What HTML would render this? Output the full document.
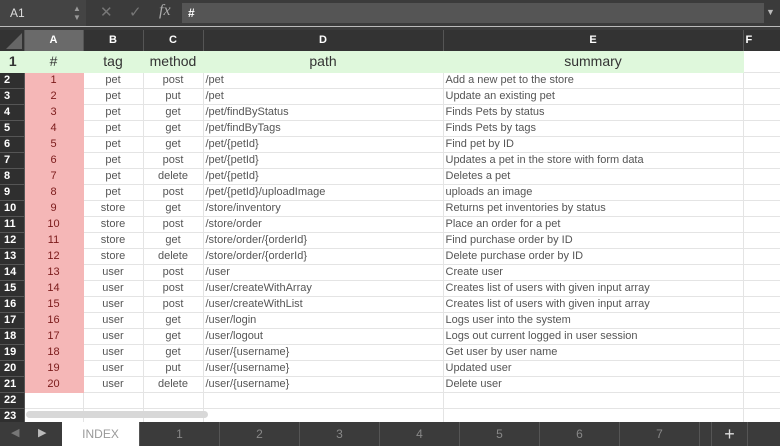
<!DOCTYPE html>
<html><head><meta charset="utf-8"><style>
*{margin:0;padding:0;box-sizing:border-box}
body{width:780px;height:446px;overflow:hidden;background:#fff;font-family:"Liberation Sans",sans-serif;position:relative}
#fb{position:absolute;left:0;top:0;width:780px;height:26px;background:#3b3b3b}
#nb{position:absolute;left:0;top:0;width:86px;height:26px;background:#444;color:#ddd;font-size:12px;line-height:26px;padding-left:10px}
#inp{position:absolute;left:182px;top:3px;width:582px;height:20px;background:#555;color:#fff;font-weight:bold;font-size:12px;line-height:20px;padding-left:6px}
#sep{position:absolute;left:0;top:26px;width:780px;height:4px;background:#3b3b3b;border-top:1px solid #bbb}
table{position:absolute;left:0;top:30px;border-collapse:collapse;table-layout:fixed;width:790px}
td{overflow:hidden;white-space:nowrap;font-size:11px;color:#555;height:16px;line-height:15px;border-right:1px solid #e4e4e4;border-bottom:1px solid #e4e4e4;padding:0 2px}
tr.h td{height:21px;background:#333;color:#fff;font-weight:bold;text-align:center;font-size:11px;border-right:1px solid #555;border-bottom:none}
tr.h td.sel{background:#6a6a6a}
tr.r1 td{height:21px;background:#dff8dc;color:#333;font-size:14px;text-align:center;border-color:#dff8dc}
td.rn{background:#2f2f2f;color:#fff;font-weight:bold;text-align:left;padding-left:4px;font-size:11px;border-color:#555}
td.a{background:#f5b7b7;color:#7a1a1a;text-align:center;border-color:#f5b7b7}
td.c{text-align:center}
#tabs{position:absolute;left:0;top:422px;width:780px;height:24px;background:#3b3b3b}
.t{position:absolute;top:0;height:24px;width:80px;color:#888;font-size:12px;text-align:center;line-height:24px;border-right:1px solid #555}
</style></head><body>
<div id="fb"><div id="nb">A1<span style="position:absolute;left:73px;top:0;color:#999;font-size:8px;line-height:9px;top:4px">▲<br>▼</span></div>
<span style="position:absolute;left:100px;top:3px;color:#777;font-size:15px">✕</span>
<span style="position:absolute;left:129px;top:3px;color:#777;font-size:15px">✓</span>
<span style="position:absolute;left:159px;top:2px;color:#aaa;font-size:16px;font-style:italic;font-family:'Liberation Serif',serif">fx</span>
<div id="inp">#</div>
<span style="position:absolute;left:766px;top:7px;color:#bbb;font-size:9px">▼</span></div>
<div id="sep"></div>
<table>
<colgroup><col style="width:24px"><col style="width:59px"><col style="width:60px"><col style="width:60px"><col style="width:240px"><col style="width:300px"><col style="width:47px"></colgroup>
<tr class="h"><td style="background:#333;position:relative"><span style="position:absolute;right:2px;bottom:2px;width:0;height:0;border-left:16px solid transparent;border-bottom:16px solid #666"></span></td><td class="sel">A</td><td>B</td><td>C</td><td>D</td><td>E</td><td style="text-align:left">F</td></tr>
<tr class="r1"><td class="rn">1</td><td>#</td><td>tag</td><td>method</td><td>path</td><td>summary</td><td style="background:#fff;border-color:#e4e4e4"></td></tr>
<tr><td class="rn">2</td><td class="a">1</td><td class="c">pet</td><td class="c">post</td><td>/pet</td><td>Add a new pet to the store</td><td></td></tr>
<tr><td class="rn">3</td><td class="a">2</td><td class="c">pet</td><td class="c">put</td><td>/pet</td><td>Update an existing pet</td><td></td></tr>
<tr><td class="rn">4</td><td class="a">3</td><td class="c">pet</td><td class="c">get</td><td>/pet/findByStatus</td><td>Finds Pets by status</td><td></td></tr>
<tr><td class="rn">5</td><td class="a">4</td><td class="c">pet</td><td class="c">get</td><td>/pet/findByTags</td><td>Finds Pets by tags</td><td></td></tr>
<tr><td class="rn">6</td><td class="a">5</td><td class="c">pet</td><td class="c">get</td><td>/pet/{petId}</td><td>Find pet by ID</td><td></td></tr>
<tr><td class="rn">7</td><td class="a">6</td><td class="c">pet</td><td class="c">post</td><td>/pet/{petId}</td><td>Updates a pet in the store with form data</td><td></td></tr>
<tr><td class="rn">8</td><td class="a">7</td><td class="c">pet</td><td class="c">delete</td><td>/pet/{petId}</td><td>Deletes a pet</td><td></td></tr>
<tr><td class="rn">9</td><td class="a">8</td><td class="c">pet</td><td class="c">post</td><td>/pet/{petId}/uploadImage</td><td>uploads an image</td><td></td></tr>
<tr><td class="rn">10</td><td class="a">9</td><td class="c">store</td><td class="c">get</td><td>/store/inventory</td><td>Returns pet inventories by status</td><td></td></tr>
<tr><td class="rn">11</td><td class="a">10</td><td class="c">store</td><td class="c">post</td><td>/store/order</td><td>Place an order for a pet</td><td></td></tr>
<tr><td class="rn">12</td><td class="a">11</td><td class="c">store</td><td class="c">get</td><td>/store/order/{orderId}</td><td>Find purchase order by ID</td><td></td></tr>
<tr><td class="rn">13</td><td class="a">12</td><td class="c">store</td><td class="c">delete</td><td>/store/order/{orderId}</td><td>Delete purchase order by ID</td><td></td></tr>
<tr><td class="rn">14</td><td class="a">13</td><td class="c">user</td><td class="c">post</td><td>/user</td><td>Create user</td><td></td></tr>
<tr><td class="rn">15</td><td class="a">14</td><td class="c">user</td><td class="c">post</td><td>/user/createWithArray</td><td>Creates list of users with given input array</td><td></td></tr>
<tr><td class="rn">16</td><td class="a">15</td><td class="c">user</td><td class="c">post</td><td>/user/createWithList</td><td>Creates list of users with given input array</td><td></td></tr>
<tr><td class="rn">17</td><td class="a">16</td><td class="c">user</td><td class="c">get</td><td>/user/login</td><td>Logs user into the system</td><td></td></tr>
<tr><td class="rn">18</td><td class="a">17</td><td class="c">user</td><td class="c">get</td><td>/user/logout</td><td>Logs out current logged in user session</td><td></td></tr>
<tr><td class="rn">19</td><td class="a">18</td><td class="c">user</td><td class="c">get</td><td>/user/{username}</td><td>Get user by user name</td><td></td></tr>
<tr><td class="rn">20</td><td class="a">19</td><td class="c">user</td><td class="c">put</td><td>/user/{username}</td><td>Updated user</td><td></td></tr>
<tr><td class="rn">21</td><td class="a">20</td><td class="c">user</td><td class="c">delete</td><td>/user/{username}</td><td>Delete user</td><td></td></tr>
<tr><td class="rn">22</td><td></td><td></td><td></td><td></td><td></td><td></td></tr>
<tr><td class="rn">23</td><td></td><td></td><td></td><td></td><td></td><td></td></tr>
</table>
<div style="position:absolute;left:26px;top:411px;width:182px;height:7px;border-radius:4px;background:#d8d8d8"></div>
<div id="tabs">
<span style="position:absolute;left:11px;top:4px;color:#777;font-size:11px">◀</span>
<span style="position:absolute;left:38px;top:4px;color:#bbb;font-size:11px">▶</span>
<div class="t" style="left:62px;width:78px;background:#fff;color:#999">INDEX</div>
<div class="t" style="left:140px">1</div><div class="t" style="left:220px">2</div><div class="t" style="left:300px">3</div><div class="t" style="left:380px">4</div><div class="t" style="left:460px">5</div><div class="t" style="left:540px">6</div><div class="t" style="left:620px">7</div>
<div class="t" style="left:700px;width:12px"></div>
<div class="t" style="left:712px;width:36px;color:#ddd;font-size:18px">+</div>
</div>
</body></html>
